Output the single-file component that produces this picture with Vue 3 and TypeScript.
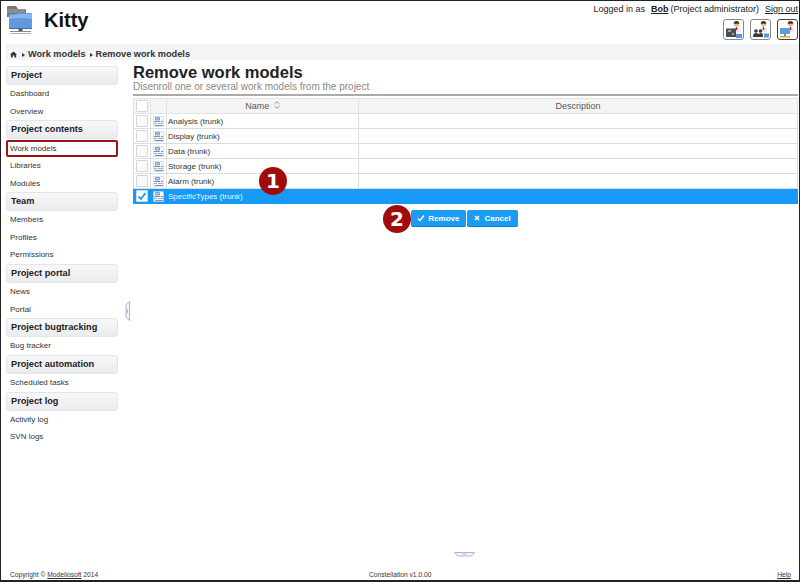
<script setup lang="ts">
interface Group { title: string; items: string[] }
const groups: Group[] = [
  { title: 'Project', items: ['Dashboard', 'Overview'] },
  { title: 'Project contents', items: ['Work models', 'Libraries', 'Modules'] },
  { title: 'Team', items: ['Members', 'Profiles', 'Permissions'] },
  { title: 'Project portal', items: ['News', 'Portal'] },
  { title: 'Project bugtracking', items: ['Bug tracker'] },
  { title: 'Project automation', items: ['Scheduled tasks'] },
  { title: 'Project log', items: ['Activity log', 'SVN logs'] },
]
const rows = ['Analysis', 'Display', 'Data', 'Storage', 'Alarm', 'SpecificTypes']
const tools = ['server', 'team', 'network']
</script>

<template>
  <div class="page">
    <header class="top">
      <div class="brand">
        <svg class="logo" width="26" height="30" viewBox="0 0 26 30">
          <path d="M0 2q0-1 1-1h8l2 3h7q1 0 1 1v7H0z" fill="#77777a" />
          <path d="M0 4h18v4H0z" fill="#8e8e90" />
          <path d="M2 24V10q0-1 1-1h6l2-1h13q1 0 1 1v15z" fill="#5f9ade" />
          <path d="M2 13q0-3 2-3h5l2-1h13q1 0 1 1v4q-12-2-23 0z" fill="#86b6ea" />
          <path d="M2 23h23v1H2z" fill="#3f6fa8" />
          <path d="M11.500 24h4v3h-4z" fill="#555" />
          <path d="M3 26h21v1H3z" fill="#8a8a8a" />
          <path d="M3 28h21v1H3z" fill="#b0b0b0" />
        </svg>
        <span class="app-name">Kitty</span>
      </div>
      <div class="account">
        <div class="login">
          <span>Logged in as</span>
          <a class="user">Bob</a>
          <span class="role">(Project administrator)</span>
          <a class="signout">Sign out</a>
        </div>
        <div class="tools">
          <button v-for="t in tools" :key="t" class="tool" :class="{ active: t === 'network' }">
            <svg width="18" height="19" viewBox="0 0 18 19">
              <circle cx="11.500" cy="4" r="2.600" fill="#e9b48e" />
              <path d="M8.700 3.700a2.800 2.800 0 0 1 5.600 0z" fill="#4a3020" />
              <path d="M7.500 12c0-4 1.600-5 4-5s4 1 4 5z" fill="#e9e9e9" />
              <path d="M11 7h1l.3 3h-1.600z" fill="#c02020" />
              <g v-if="t === 'server'">
                <path d="M1 8.500h10v8.500H1z" fill="#4a4f55" />
                <path d="M3 10h3v2H3zM7 13h2v2H7z" fill="#a0a4a8" />
                <path d="M11 14h6v4h-6z" fill="#5a96dc" />
              </g>
              <g v-else-if="t === 'team'">
                <circle cx="4" cy="11" r="1.800" fill="#3a3a3a" />
                <circle cx="8.500" cy="11" r="1.800" fill="#3a3a3a" />
                <path d="M1 17c0-3 1-4 3-4s3 1 3 4zM6 17c0-3 1-4 3-4s2 1 2 4z" fill="#3a3a3a" />
                <path d="M12 13.500h5v4h-5z" fill="#5a96dc" />
              </g>
              <g v-else>
                <path d="M1 8h10v6H1z" fill="#5b9fe0" />
                <path d="M5 14h2v2H5z" fill="#888" />
                <path d="M1 16h10v1.500H1z" fill="#e8a030" />
              </g>
            </svg>
          </button>
        </div>
      </div>
    </header>

    <nav class="crumbs">
      <svg class="home" width="7" height="7" viewBox="0 0 8 8">
        <path d="M4 .5 8 4H7v3.500H5V5H3v2.500H1V4H0z" fill="#333" />
      </svg>
      <span class="arrow"></span>
      <span>Work models</span>
      <span class="arrow"></span>
      <span>Remove work models</span>
    </nav>

    <div class="body">
      <aside class="side">
        <section v-for="g in groups" :key="g.title">
          <h3 class="group">{{ g.title }}</h3>
          <a
            v-for="i in g.items"
            :key="i"
            class="item"
            :class="{ current: i === 'Work models' }"
          >{{ i }}</a>
        </section>
      </aside>

      <main class="main">
        <h1 class="title">Remove work models</h1>
        <p class="sub">Disenroll one or several work models from the project</p>
        <table class="grid">
          <colgroup>
            <col class="c-check" />
            <col class="c-icon" />
            <col class="c-name" />
            <col />
          </colgroup>
          <thead>
            <tr>
              <th><span class="box"></span></th>
              <th></th>
              <th>
                Name
                <svg class="sort" width="6" height="8" viewBox="0 0 6 8">
                  <path d="M.5 3 3 .7 5.500 3M.5 5 3 7.300 5.500 5" fill="none" stroke="#777" stroke-width=".8" />
                </svg>
              </th>
              <th>Description</th>
            </tr>
          </thead>
          <tbody>
            <tr v-for="r in rows" :key="r" :class="{ selected: r === 'SpecificTypes' }">
              <td class="cell-check">
                <span class="box">
                  <svg v-if="r === 'SpecificTypes'" width="10" height="10" viewBox="0 0 10 10">
                    <path d="M1.500 5.500 4 8l4.500-6" fill="none" stroke="#1a9cf5" stroke-width="1.800" />
                  </svg>
                </span>
              </td>
              <td class="cell-icon">
                <svg width="11" height="11" viewBox="0 0 11 11">
                  <path d="M.5.5h10v10H.5z" fill="#f4f7fc" stroke="#c4d0e2" stroke-width=".6" />
                  <path d="M2.500 1.500h4v2.500h-4z" fill="#b4c8e4" stroke="#6a86b0" stroke-width=".7" />
                  <path d="M1 5.500h6M8 5.500h2" stroke="#6a86b0" stroke-width=".9" />
                  <path d="M1 7.500h3M5 7.500h5" stroke="#94a8c6" stroke-width=".9" />
                  <path d="M2 9.500h8" stroke="#6a86b0" stroke-width=".9" />
                </svg>
              </td>
              <td class="cell-name">{{ r }} (trunk)</td>
              <td></td>
            </tr>
          </tbody>
        </table>
        <div class="actions">
          <button class="btn">
            <svg width="8" height="8" viewBox="0 0 8 8"><path d="M1 4.500 3 6.500 7 1.500" fill="none" stroke="#fff" stroke-width="1.500" /></svg>
            Remove
          </button>
          <button class="btn">
            <svg width="8" height="8" viewBox="0 0 8 8"><path d="M2 2l4 4M6 2 2 6" fill="none" stroke="#fff" stroke-width="1.500" /></svg>
            Cancel
          </button>
        </div>
      </main>
    </div>

    <footer class="foot">
      <span class="foot-left">Copyright © <a>Modeliosoft</a> 2014</span>
      <span class="foot-mid">Constellation v1.0.00</span>
      <a class="foot-right">Help</a>
    </footer>

    <span class="badge badge-one">1</span>
    <span class="badge badge-two">2</span>
    <svg class="handle-left" width="5" height="20" viewBox="0 0 5 20">
      <path d="M4.500.5 1 3.500v13l3.500 3z" fill="#f2f5fb" stroke="#a9b8d8" />
      <path d="M2.500 8v4" stroke="#a9b8d8" />
    </svg>
    <svg class="handle-bottom" width="21" height="5" viewBox="0 0 21 5">
      <path d="M.5.500h20l-3 3.500h-14z" fill="#f2f5fb" stroke="#a9b8d8" />
      <path d="M8.500 2h4" stroke="#a9b8d8" />
    </svg>
  </div>
</template>

<style scoped>
.page {
  position: relative;
  box-sizing: border-box;
  width: 800px;
  height: 582px;
  border: 1px solid #222;
  border-bottom-width: 2px;
  background: #fff;
  display: flex;
  flex-direction: column;
  font-family: "Liberation Sans", Arial, sans-serif;
  color: #222;
  overflow: hidden;
}
.top {
  height: 43px;
  display: flex;
  justify-content: space-between;
  padding-left: 6px;
  padding-right: 1px;
}
.brand {
  display: flex;
  align-items: flex-start;
}
.logo {
  margin-top: 4px;
}
.app-name {
  margin-left: 11px;
  margin-top: 5px;
  font-size: 20px;
  line-height: 28px;
  font-weight: 700;
  color: #111;
}
.account {
  display: flex;
  flex-direction: column;
  align-items: flex-end;
}
.login {
  display: flex;
  gap: 5px;
  margin-top: 3px;
  font-size: 9px;
  line-height: 11px;
}
.role {
  margin-left: -3px;
}
.user {
  font-weight: 700;
  text-decoration: underline;
  margin-left: 1px;
}
.signout {
  text-decoration: underline;
  margin-left: 1px;
}
.tools {
  display: flex;
  gap: 6px;
  margin-top: 4px;
}
.tool {
  box-sizing: border-box;
  width: 21px;
  height: 21px;
  padding: 0;
  border: 1px solid #888;
  border-radius: 3px;
  background: #fff;
  display: flex;
  align-items: center;
  justify-content: center;
}
.tool.active {
  border-color: #444;
}
.crumbs {
  margin-left: 5px;
  height: 16px;
  background: #f3f4f6;
  display: flex;
  align-items: flex-end;
  padding-left: 4px;
  font-size: 9.200px;
  line-height: 11px;
  font-weight: 700;
  color: #333;
}
.home {
  margin-bottom: 2px;
}
.arrow {
  width: 0;
  height: 0;
  margin: 0 3px 3px 5px;
  border-left: 3px solid #333;
  border-top: 2.500px solid transparent;
  border-bottom: 2.500px solid transparent;
}
.arrow + span + .arrow {
  margin-left: 4px;
}
.body {
  flex: 1;
  display: flex;
  min-height: 0;
}
.side {
  width: 112px;
  margin-left: 5px;
  padding-top: 6px;
}
.group {
  box-sizing: border-box;
  height: 19px;
  margin: 0;
  padding-left: 4px;
  border: 1px solid #e4e5e8;
  border-radius: 3px;
  background: linear-gradient(#f8f8f9, #eaebed);
  font-size: 9.200px;
  line-height: 16px;
  font-weight: 700;
  color: #222;
}
.item {
  box-sizing: border-box;
  display: block;
  height: 17.650px;
  padding-left: 4px;
  font-size: 8px;
  line-height: 18px;
  color: #333;
}
.item.current {
  height: 16.650px;
  line-height: 13px;
  margin-top: 1px;
  border: 2px solid #a01018;
  border-radius: 2px;
  padding-left: 2px;
}
.main {
  flex: 1;
  margin-left: 15px;
  margin-right: 1px;
  padding-top: 5px;
  min-width: 0;
}
.title {
  margin: 0;
  font-size: 16.500px;
  line-height: 15px;
  font-weight: 700;
  color: #222;
}
.sub {
  margin: 0;
  height: 14px;
  border-bottom: 2px solid #aaa;
  box-sizing: content-box;
  font-size: 10px;
  line-height: 13px;
  color: #888;
}
.grid {
  width: 100%;
  margin-top: 2px;
  border-collapse: collapse;
  table-layout: fixed;
  font-size: 8px;
}
.c-check {
  width: 17px;
}
.c-icon {
  width: 16px;
}
.c-name {
  width: 192px;
}
th {
  height: 14px;
  padding: 0;
  border: 1px solid #e2e2e2;
  background: #f5f5f6;
  font-weight: 400;
  font-size: 9px;
  color: #555;
}
td {
  height: 14px;
  padding: 0;
  border: 1px solid #dcdcdc;
  color: #333;
}
.box {
  box-sizing: border-box;
  display: block;
  width: 12px;
  height: 12px;
  margin: 0 auto;
  border: 1px solid #d6d6d6;
  border-radius: 1px;
  background: #fff;
}
.box svg {
  display: block;
}
.cell-check .box {
  background: #fafafa;
}
.cell-icon {
  text-align: center;
  line-height: 0;
}
.cell-name {
  padding-left: 1px;
}
.sort {
  margin-left: 2px;
}
.selected td {
  background: #159bf7;
  border-color: #159bf7;
  color: #e8f4ff;
}
.selected .box {
  background: #fff;
}
.actions {
  display: flex;
  justify-content: center;
  gap: 1px;
  margin-top: 6px;
  padding-right: 2px;
}
.btn {
  height: 17px;
  padding: 0 7px 0 6px;
  border: 0;
  border-bottom: 1px solid #0f7cc8;
  border-radius: 2px;
  background: #1a9cf5;
  color: #fff;
  font: 700 8px "Liberation Sans", Arial, sans-serif;
  display: flex;
  align-items: center;
  gap: 3px;
}
.foot {
  position: relative;
  height: 17px;
  font-size: 6.700px;
  line-height: 23px;
  color: #333;
  flex: none;
}
.foot a {
  text-decoration: underline;
}
.foot-left {
  position: absolute;
  left: 9px;
}
.foot-mid {
  position: absolute;
  left: 368px;
}
.foot-right {
  position: absolute;
  right: 8px;
}
.badge {
  position: absolute;
  width: 28px;
  height: 28px;
  border-radius: 50%;
  background: #a00c0c;
  color: #fff;
  font-family: "DejaVu Sans", sans-serif;
  font-weight: 700;
  font-size: 20px;
  line-height: 28px;
  text-align: center;
}
.badge-one {
  left: 258px;
  top: 166px;
}
.badge-two {
  left: 382px;
  top: 204px;
}
.handle-left {
  position: absolute;
  left: 124px;
  top: 300px;
}
.handle-bottom {
  position: absolute;
  left: 453px;
  top: 551px;
}
</style>
